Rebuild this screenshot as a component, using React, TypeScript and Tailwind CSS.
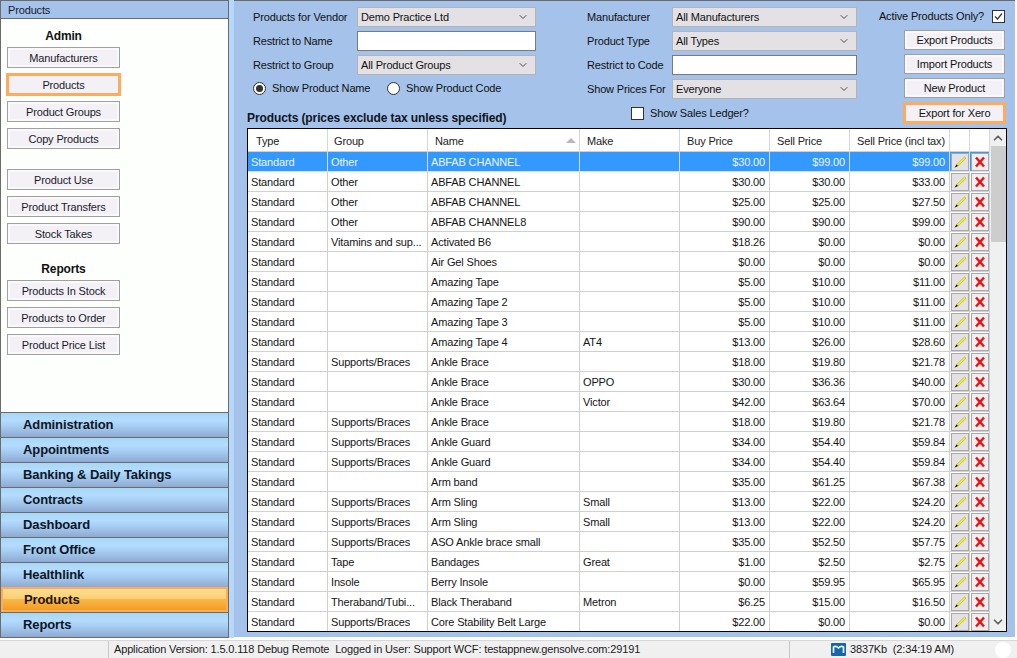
import { ChevronDown, ChevronUp } from "lucide-react"

const font = "font-['Liberation_Sans',Arial,sans-serif]"

const adminA = ["Manufacturers", "Products", "Product Groups", "Copy Products"]
const adminB = ["Product Use", "Product Transfers", "Stock Takes"]
const reports = ["Products In Stock", "Products to Order", "Product Price List"]
const nav = ["Administration", "Appointments", "Banking & Daily Takings", "Contracts", "Dashboard", "Front Office", "Healthlink", "Products", "Reports"]

const rows: string[][] = [
  ["Standard", "Other", "ABFAB CHANNEL", "", "$30.00", "$99.00", "$99.00"],
  ["Standard", "Other", "ABFAB CHANNEL", "", "$30.00", "$30.00", "$33.00"],
  ["Standard", "Other", "ABFAB CHANNEL", "", "$25.00", "$25.00", "$27.50"],
  ["Standard", "Other", "ABFAB CHANNEL8", "", "$90.00", "$90.00", "$99.00"],
  ["Standard", "Vitamins and sup...", "Activated B6", "", "$18.26", "$0.00", "$0.00"],
  ["Standard", "", "Air Gel Shoes", "", "$0.00", "$0.00", "$0.00"],
  ["Standard", "", "Amazing Tape", "", "$5.00", "$10.00", "$11.00"],
  ["Standard", "", "Amazing Tape 2", "", "$5.00", "$10.00", "$11.00"],
  ["Standard", "", "Amazing Tape 3", "", "$5.00", "$10.00", "$11.00"],
  ["Standard", "", "Amazing Tape 4", "AT4", "$13.00", "$26.00", "$28.60"],
  ["Standard", "Supports/Braces", "Ankle Brace", "", "$18.00", "$19.80", "$21.78"],
  ["Standard", "", "Ankle Brace", "OPPO", "$30.00", "$36.36", "$40.00"],
  ["Standard", "", "Ankle Brace", "Victor", "$42.00", "$63.64", "$70.00"],
  ["Standard", "Supports/Braces", "Ankle Brace", "", "$18.00", "$19.80", "$21.78"],
  ["Standard", "Supports/Braces", "Ankle Guard", "", "$34.00", "$54.40", "$59.84"],
  ["Standard", "Supports/Braces", "Ankle Guard", "", "$34.00", "$54.40", "$59.84"],
  ["Standard", "", "Arm band", "", "$35.00", "$61.25", "$67.38"],
  ["Standard", "Supports/Braces", "Arm Sling", "Small", "$13.00", "$22.00", "$24.20"],
  ["Standard", "Supports/Braces", "Arm Sling", "Small", "$13.00", "$22.00", "$24.20"],
  ["Standard", "Supports/Braces", "ASO Ankle brace small", "", "$35.00", "$52.50", "$57.75"],
  ["Standard", "Tape", "Bandages", "Great", "$1.00", "$2.50", "$2.75"],
  ["Standard", "Insole", "Berry Insole", "", "$0.00", "$59.95", "$65.95"],
  ["Standard", "Theraband/Tubi...", "Black Theraband", "Metron", "$6.25", "$15.00", "$16.50"],
  ["Standard", "Supports/Braces", "Core Stability Belt Large", "", "$22.00", "$0.00", "$0.00"],
]

const cols = "grid grid-cols-[80px_100px_152px_100px_90px_80px_100px_20px_20px]"

function SideButton({ label, active }: { label: string; active?: boolean }) {
  return (
    <div className={active
      ? "flex h-[23px] w-[115px] -mx-px -my-px items-center justify-center border-[3px] border-[#fdab5c] bg-[#f3f1f6] pt-px text-[#1a1a2a]"
      : "flex h-[21px] w-[113px] items-center justify-center border border-[#a0a0a0] bg-[#f3f1f6] pt-px text-[#1a1a2a] shadow-[inset_0_0_0_2px_#f9f9fb]"}>
      {label}
    </div>
  )
}

function Select({ value, width }: { value: string; width: string }) {
  return (
    <div className={`flex h-[20px] ${width} items-center justify-between border border-[#b4b4b4] bg-[#e3e1e4] pl-[3px] pr-[6px] text-[#111]`}>
      <span>{value}</span>
      <ChevronDown size={12} strokeWidth={1.75} className="text-[#333]" />
    </div>
  )
}

function TextBox({ width }: { width: string }) {
  return <div className={`h-[20px] ${width} border border-[#7a7a7a] bg-white`} />
}

function ActionButton({ label, active }: { label: string; active?: boolean }) {
  return (
    <div className={active
      ? "flex h-[22px] w-[103px] -mr-px items-center justify-center border-[3px] border-[#fdab5c] bg-[#f3f1f6]"
      : "flex h-[20px] w-[101px] items-center justify-center border border-[#a0a0a0] bg-[#f3f1f6] pt-px shadow-[inset_0_0_0_2px_#f9f9fb]"}>
      {label}
    </div>
  )
}

function Pencil() {
  return (
    <svg width="14" height="14" viewBox="0 0 14 14">
      <path d="M3.5 9.5 L11.5 2 L13 3.2 L5 11 Z" fill="#f5f020" stroke="#8a8a20" strokeWidth="0.4" />
      <path d="M1.5 12.8 L3.5 9.5 L5 11 Z" fill="#111" />
    </svg>
  )
}

function RedX() {
  return (
    <svg width="12" height="12" viewBox="0 0 12 12">
      <path d="M2 1.5 L10 10.5 M10 1.5 L2 10.5" stroke="#f01010" strokeWidth="2.4" fill="none" />
    </svg>
  )
}

function Row({ row, selected }: { row: string[]; selected: boolean }) {
  const cell = selected ? "border-r border-[#d0e4fa]" : "border-r border-[#d0d0d0]"
  return (
    <div className={`${cols} h-[20px] border-b ${selected ? "border-[#d0e4fa] bg-[#3399ff] text-[#eef6ff]" : "border-[#d0d0d0] bg-white text-[#151515]"}`}>
      <div className={`${cell} truncate pl-[3px] leading-[20px]`}>{row[0]}</div>
      <div className={`${cell} truncate pl-[3px] leading-[20px]`}>{row[1]}</div>
      <div className={`${cell} truncate pl-[3px] leading-[20px]`}>{row[2]}</div>
      <div className={`${cell} truncate pl-[3px] leading-[20px]`}>{row[3]}</div>
      <div className={`${cell} pr-[4px] text-right leading-[20px]`}>{row[4]}</div>
      <div className={`${cell} pr-[4px] text-right leading-[20px]`}>{row[5]}</div>
      <div className={`${cell} pr-[4px] text-right leading-[20px]`}>{row[6]}</div>
      <div className={`${cell} flex items-center justify-center`}>
        <div className="flex h-[18px] w-[18px] items-center justify-center border border-[#a8a8a8] bg-[#e3e1e4]"><Pencil /></div>
      </div>
      <div className={`${cell} flex items-center justify-center`}>
        <div className="flex h-[18px] w-[18px] items-center justify-center border border-[#a8a8a8] bg-[#f0eef0]"><RedX /></div>
      </div>
    </div>
  )
}

export default function App() {
  return (
    <div className={`${font} flex h-[658px] w-[1017px] flex-col overflow-hidden whitespace-nowrap bg-white text-[11px] tracking-[-0.15px] text-[#111]`}>
      <div className="flex h-[638px]">
        {/* left nav */}
        <div className="flex w-[229px] shrink-0 flex-col border-x border-y border-[#6b6b6b] bg-[#fdfffc]">
          <div className="h-[18px] border-b border-[#6b6b6b] bg-[#a4c2ea] pl-[7px] leading-[18px] text-[#16202e]">Products</div>
          <div className="flex h-[393px] flex-col pl-[6px]">
            <div className="mt-[9px] w-[113px] text-center text-[12px] font-bold leading-[16px]">Admin</div>
            <div className="mt-[3px] flex flex-col gap-[6px]">
              {adminA.map(b => <SideButton key={b} label={b} active={b === "Products"} />)}
            </div>
            <div className="mt-[20px] flex flex-col gap-[6px]">
              {adminB.map(b => <SideButton key={b} label={b} />)}
            </div>
            <div className="mt-[17px] w-[113px] text-center text-[12px] font-bold leading-[16px]">Reports</div>
            <div className="mt-[3px] flex flex-col gap-[6px]">
              {reports.map(b => <SideButton key={b} label={b} />)}
            </div>
          </div>
          <div className="flex flex-1 flex-col overflow-hidden">
            {nav.map(n => (
              <div
                key={n}
                className={n === "Products"
                  ? "h-[25px] shrink-0 border-[2px] border-[#fdab5c] bg-[linear-gradient(#fcdc8e,#fbd078_45%,#f8b848_50%,#f49c20)] pl-[21px] text-[13px] font-bold leading-[21px] tracking-[-0.1px] text-[#1a1206]"
                  : "h-[25px] shrink-0 border-t border-[#6b6b6b] bg-[linear-gradient(#a6d8f4,#b4dcff_30%,#a6cdf2_55%,#8ea9d2)] pl-[22px] text-[13px] font-bold leading-[23px] tracking-[-0.1px] text-[#0c1626]"}
              >
                {n}
              </div>
            ))}
          </div>
        </div>

        <div className="w-[5px] shrink-0 bg-[#b6d8fa]" />

        {/* products panel */}
        <div className="mb-px mr-[2px] flex min-w-0 flex-1 flex-col border-t border-[#6b6b6b] bg-[#a4c2ea] pl-[13px] pr-[8px] pt-[6px]">
          <div className="flex h-[121px]">
            <div className="flex w-[340px] shrink-0 flex-col">
              <div className="flex flex-col gap-[4px] pl-[6px]">
                <div className="flex items-center">
                  <span className="w-[104px]">Products for Vendor</span>
                  <Select value="Demo Practice Ltd" width="w-[179px]" />
                </div>
                <div className="flex items-center">
                  <span className="w-[104px]">Restrict to Name</span>
                  <TextBox width="w-[179px]" />
                </div>
                <div className="flex items-center">
                  <span className="w-[104px]">Restrict to Group</span>
                  <Select value="All Product Groups" width="w-[179px]" />
                </div>
                <div className="-mt-px flex h-[20px] items-center">
                  <span className="flex h-[13px] w-[13px] items-center justify-center rounded-full border border-[#333] bg-white">
                    <span className="h-[7px] w-[7px] rounded-full bg-[#333]" />
                  </span>
                  <span className="ml-[6px] w-[115px]">Show Product Name</span>
                  <span className="h-[13px] w-[13px] rounded-full border border-[#333] bg-white" />
                  <span className="ml-[6px]">Show Product Code</span>
                </div>
              </div>
              <div className="mt-[12px] text-[12px] font-bold leading-[16px] tracking-[-0.1px] text-[#10141c]">Products (prices exclude tax unless specified)</div>
            </div>

            <div className="flex w-[317px] shrink-0 flex-col gap-[4px]">
              <div className="flex items-center">
                <span className="w-[85px]">Manufacturer</span>
                <Select value="All Manufacturers" width="w-[185px]" />
              </div>
              <div className="flex items-center">
                <span className="w-[85px]">Product Type</span>
                <Select value="All Types" width="w-[185px]" />
              </div>
              <div className="flex items-center">
                <span className="w-[85px]">Restrict to Code</span>
                <TextBox width="w-[185px]" />
              </div>
              <div className="flex items-center">
                <span className="w-[85px]">Show Prices For</span>
                <Select value="Everyone" width="w-[185px]" />
              </div>
              <div className="mt-[2px] flex items-center pl-[44px]">
                <span className="h-[13px] w-[13px] border border-[#333] bg-white" />
                <span className="ml-[6px]">Show Sales Ledger?</span>
              </div>
            </div>

            <div className="flex w-[101px] shrink-0 flex-col items-end gap-[4px]">
              <div className="flex h-[19px] items-center">
                <span>Active Products Only?</span>
                <span className="ml-[8px] flex h-[13px] w-[13px] items-center justify-center border border-[#333] bg-white">
                  <svg width="11" height="11" viewBox="0 0 11 11"><path d="M2 5.5 L4.5 8 L9 2.5" stroke="#333" strokeWidth="1.2" fill="none" /></svg>
                </span>
              </div>
              <ActionButton label="Export Products" />
              <ActionButton label="Import Products" />
              <ActionButton label="New Product" />
              <ActionButton label="Export for Xero" active />
            </div>
          </div>

          {/* grid */}
          <div className="flex h-[504px] border border-black bg-[#f0f0f0]">
            <div className="w-[742px] shrink-0 overflow-hidden">
              <div className={`${cols} h-[23px] border-b border-[#d0d0d0] bg-white leading-[24px] text-[#222]`}>
                <div className="border-r border-[#d8d8d8] pl-[8px]">Type</div>
                <div className="border-r border-[#d8d8d8] pl-[6px]">Group</div>
                <div className="relative border-r border-[#d8d8d8] pl-[7px]">
                  Name
                  <span className="absolute right-[3px] top-[9px] h-0 w-0 border-x-[5px] border-b-[5px] border-x-transparent border-b-[#b8b8b8]" />
                </div>
                <div className="border-r border-[#d8d8d8] pl-[7px]">Make</div>
                <div className="border-r border-[#d8d8d8] pl-[7px]">Buy Price</div>
                <div className="border-r border-[#d8d8d8] pl-[7px]">Sell Price</div>
                <div className="border-r border-[#d8d8d8] pl-[7px]">Sell Price (incl tax)</div>
                <div className="border-r border-[#d8d8d8]" />
                <div className="border-r border-[#d8d8d8]" />
              </div>
              {rows.map((r, i) => <Row key={i} row={r} selected={i === 0} />)}
            </div>
            <div className="flex flex-1 flex-col items-center bg-[#f0f0f0]">
              <ChevronUp size={14} strokeWidth={3} className="mt-[2px] text-[#606060]" />
              <div className="mt-px h-[96px] w-[15px] bg-[#cdcdcd]" />
              <ChevronDown size={14} strokeWidth={3} className="mb-[2px] mt-auto text-[#606060]" />
            </div>
          </div>
        </div>
      </div>

      {/* status bar */}
      <div className="mt-[2px] flex h-[18px] items-center border-t border-[#d8d8d8] bg-[#f0f0f0] text-[#1a1a1a]">
        <div className="h-full w-[109px] border-r border-[#c8c8c8]" />
        <div className="h-full w-[681px] border-r border-[#c8c8c8] pl-[5px] leading-[17px]">Application Version: 1.5.0.118 Debug Remote&nbsp; Logged in User: Support WCF: testappnew.gensolve.com:29191</div>
        <svg width="15" height="13" viewBox="0 0 15 13" className="ml-[41px]">
          <rect width="15" height="13" rx="1" fill="#1667a8" />
          <path d="M2.5 10 L2.5 4 Q5 2.5 7.5 5 Q10 2.5 12.5 4 L12.5 10" stroke="#e8f4ff" strokeWidth="1.7" fill="none" />
        </svg>
        <span className="ml-[4px]">3837Kb&nbsp; (2:34:19 AM)</span>
        <span className="ml-auto mr-[6px] h-[16px] w-[16px] rounded-full bg-white" />
      </div>
    </div>
  )
}
